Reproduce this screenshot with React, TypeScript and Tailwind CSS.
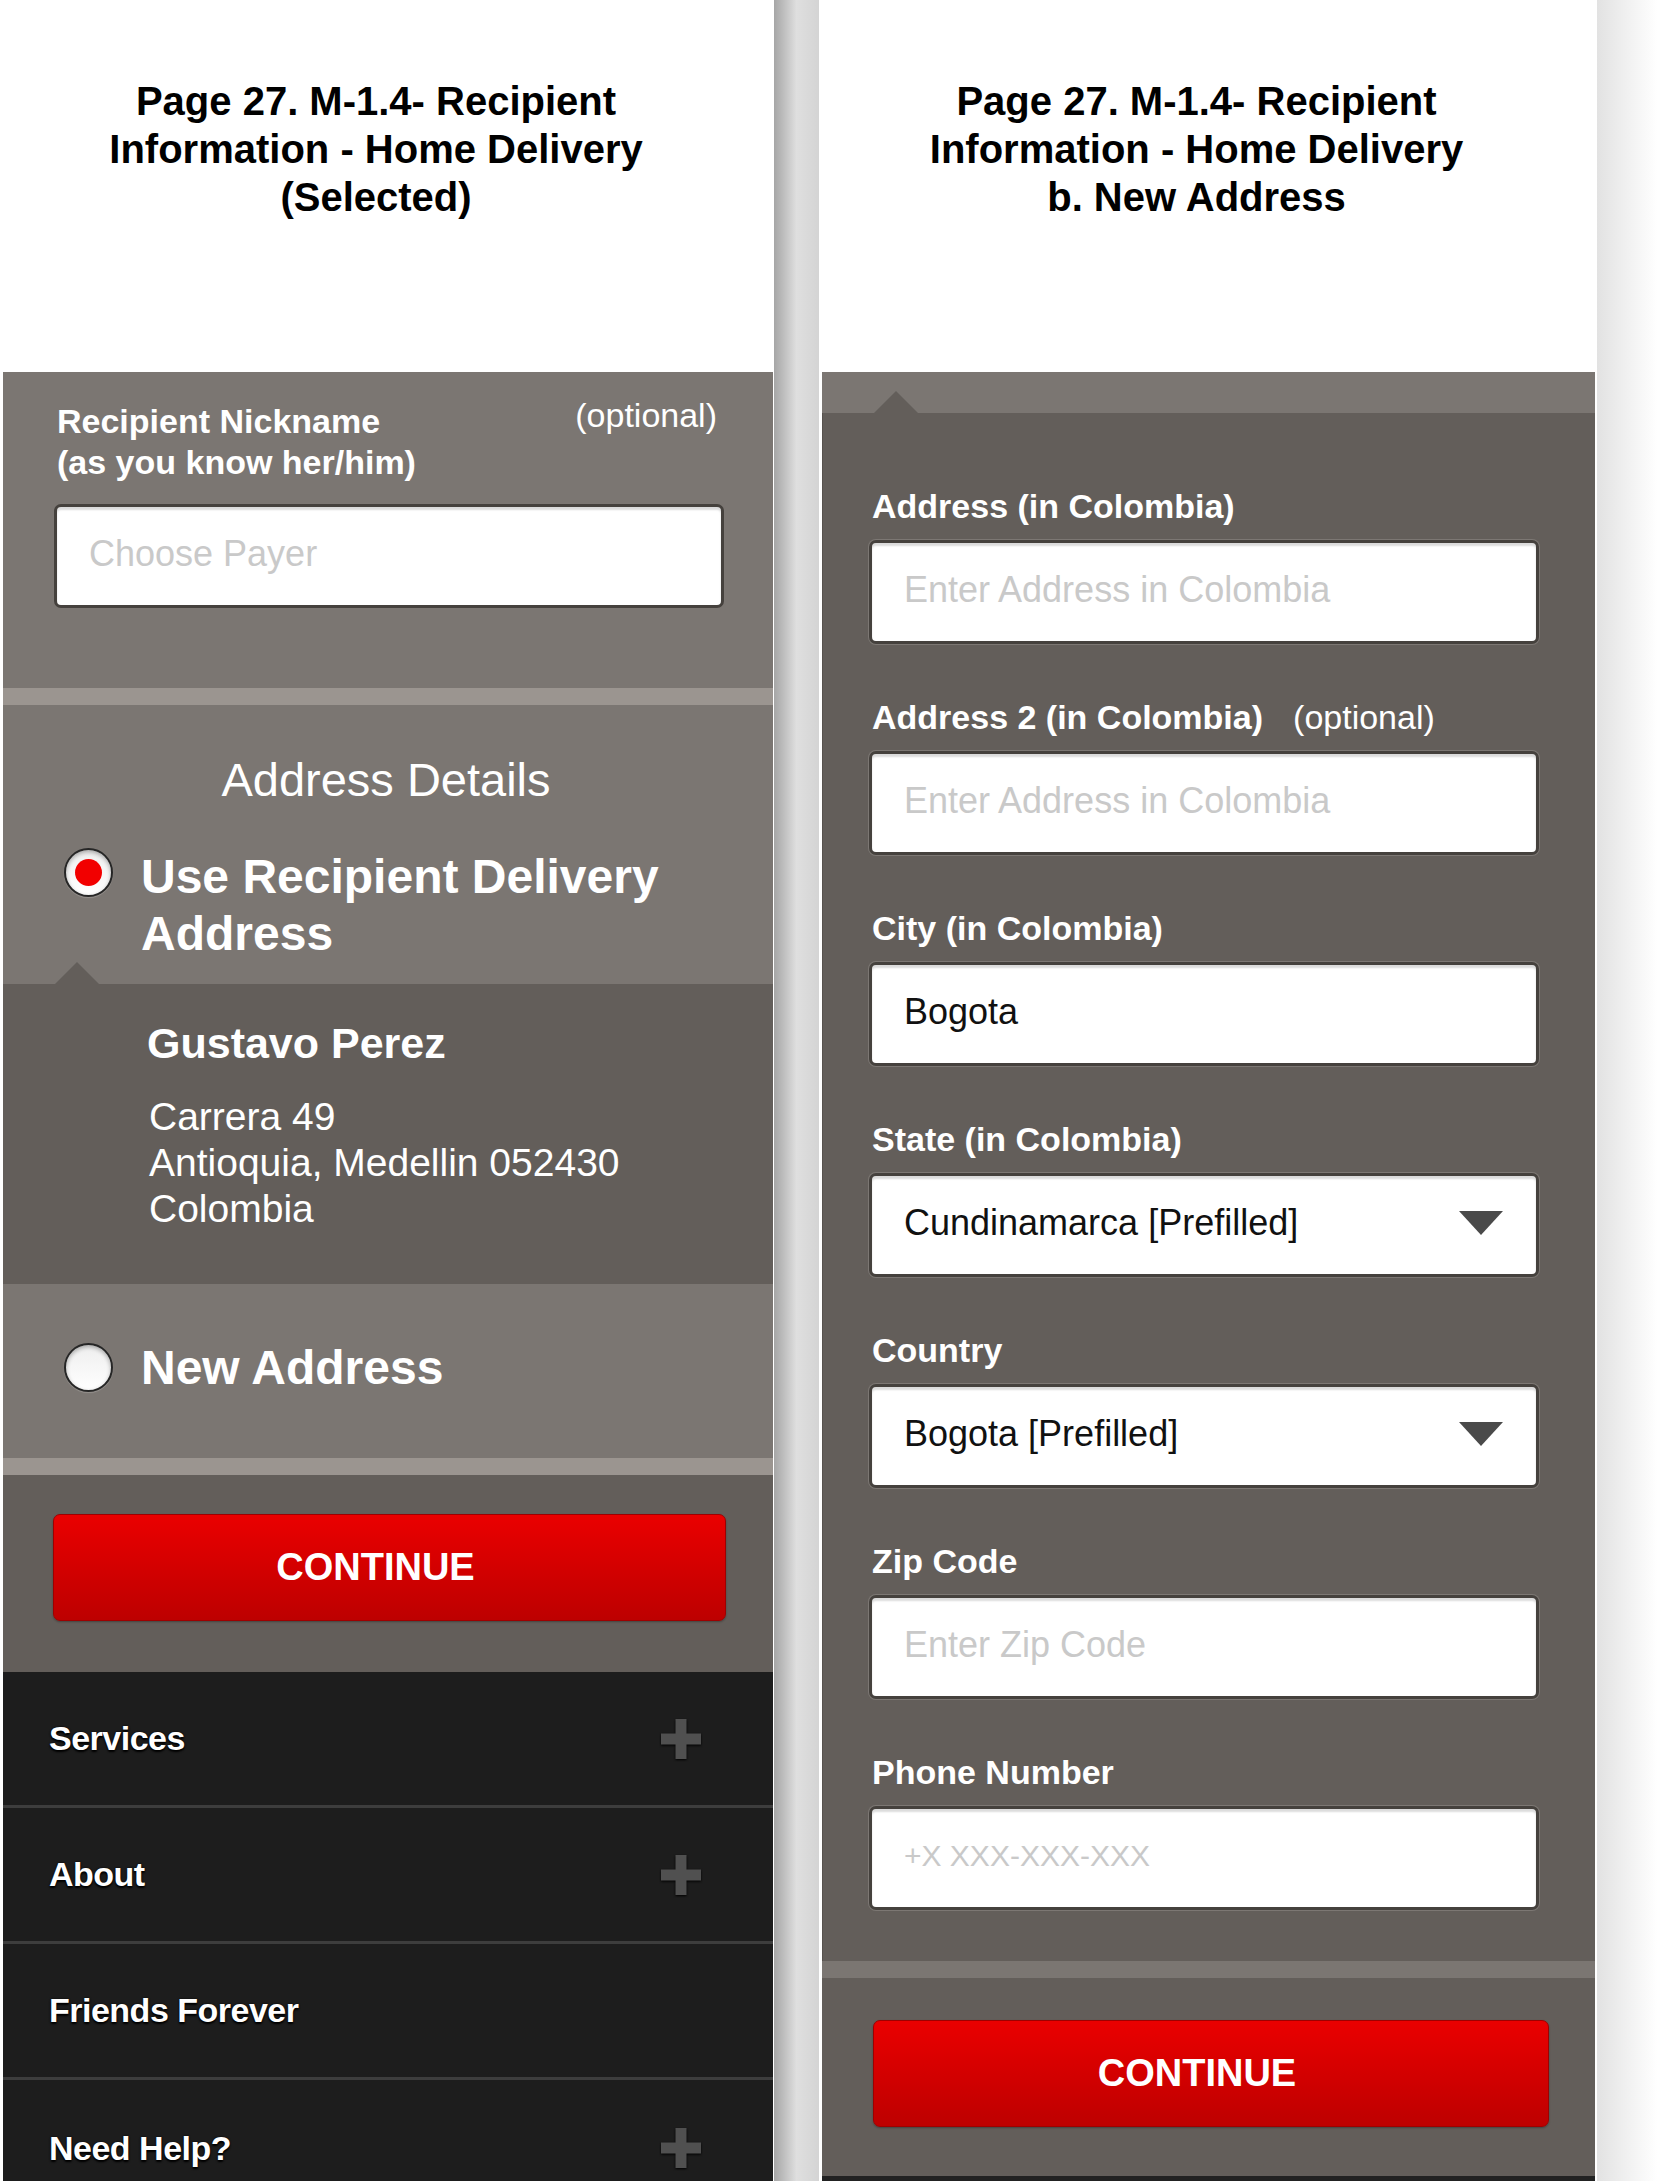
import React from "react";

const FONT = "font-['Liberation_Sans',Arial,sans-serif]";

function PageTitle({ lines }: { lines: string[] }) {
  return (
    <div className="h-[372px] bg-white pt-[77px] pr-6 text-center">
      {lines.map((l) => (
        <div key={l} className="text-[40px] leading-[48px] font-bold text-black">
          {l}
        </div>
      ))}
    </div>
  );
}

function Radio({ checked }: { checked?: boolean }) {
  return (
    <div className="flex h-[49px] w-[49px] shrink-0 items-center justify-center rounded-full border-2 border-[#262626] bg-linear-to-b from-[#eeeeee] to-white shadow-[inset_0_2px_4px_rgba(0,0,0,0.3),0_1px_1px_rgba(255,255,255,0.2)]">
      {checked && <div className="h-[27px] w-[27px] rounded-full bg-[#f20000]" />}
    </div>
  );
}

function Notch({ left, height }: { left: number; height: number }) {
  // little pointer that joins the lighter block with the dark one below
  return (
    <svg
      className="absolute bottom-0"
      style={{ left }}
      width="44"
      height={height}
      viewBox={`0 0 44 ${height}`}
    >
      <polygon points={`0,${height} 22,0 44,${height}`} fill="#635e5a" />
    </svg>
  );
}

function Caret() {
  return (
    <svg width="44" height="24" viewBox="0 0 44 24" className="shrink-0">
      <polygon points="0,0 44,0 22,24" fill="#4a4a4a" />
    </svg>
  );
}

function Plus() {
  return (
    <svg width="40" height="40" viewBox="0 0 40 40" className="drop-shadow-[0_1px_1px_#000]">
      <rect x="0" y="14.5" width="40" height="11" fill="#505050" />
      <rect x="14.5" y="0" width="11" height="40" fill="#505050" />
    </svg>
  );
}

function TextBox({
  placeholder,
  value,
  select,
  small,
}: {
  placeholder?: string;
  value?: string;
  select?: boolean;
  small?: boolean;
}) {
  return (
    <div className="flex h-[104px] items-center justify-between rounded-[7px] border-[3px] border-[#45413d] bg-white pb-[4px] pl-[32px] pr-[33px] shadow-[0_0_0_1px_#7c7773,inset_0_3px_2px_rgba(0,0,0,0.14)]">
      <span
        className={`${small ? "text-[30px]" : "text-[36px]"} leading-[40px] ${
          value ? "text-[#111]" : "text-[#c9c9c9]"
        }`}
      >
        {value ?? placeholder}
      </span>
      {select && <Caret />}
    </div>
  );
}

function ContinueButton() {
  return (
    <div className="flex h-[107px] items-center justify-center rounded-[7px] border border-[#9e0000] bg-linear-to-b from-[#ea0000] to-[#bd0000] pr-[28px] shadow-[0_1px_2px_rgba(0,0,0,0.3)]">
      <span className="text-[38px] font-bold text-white">CONTINUE</span>
    </div>
  );
}

const menu = [
  { label: "Services", plus: true },
  { label: "About", plus: true },
  { label: "Friends Forever", plus: false },
  { label: "Need Help?", plus: true },
];

function LeftScreen() {
  return (
    <div className="ml-[3px] w-[770px] shrink-0">
      <PageTitle lines={["Page 27. M-1.4- Recipient", "Information - Home Delivery", "(Selected)"]} />

      {/* nickname */}
      <div className="h-[316px] bg-[#7b7672] pt-[29px] pl-[51px] pr-[49px]">
        <div className="flex items-start justify-between pl-[3px] pr-[7px]">
          <div className="text-[34px] leading-[41px] font-bold text-white">
            Recipient Nickname
            <br />
            (as you know her/him)
          </div>
          <div className="-mt-[6px] text-[34px] leading-[41px] text-white">(optional)</div>
        </div>
        <div className="mt-[21px]">
          <TextBox placeholder="Choose Payer" />
        </div>
      </div>
      <div className="h-[17px] bg-[#9b9590]" />

      {/* address choice */}
      <div className="relative h-[279px] bg-[#7b7672] pt-[47px]">
        <div className="pr-[4px] text-center text-[47px] leading-[56px] text-white">Address Details</div>
        <div className="mt-[40px] flex items-start gap-[28px] pl-[61px]">
          <Radio checked />
          <div className="text-[48px] leading-[57px] font-bold text-white">
            Use Recipient Delivery
            <br />
            Address
          </div>
        </div>
        <Notch left={52} height={22} />
      </div>

      <div className="h-[300px] bg-[#635e5a] pt-[34px] pl-[144px] text-white">
        <div className="text-[43px] leading-[50px] font-bold">Gustavo Perez</div>
        <div className="mt-[26px] pl-[2px] text-[39px] leading-[46px]">
          Carrera 49
          <br />
          Antioquia, Medellin 052430
          <br />
          Colombia
        </div>
      </div>

      <div className="flex h-[174px] items-center gap-[28px] bg-[#7b7672] pb-[8px] pl-[61px]">
        <Radio />
        <div className="text-[48px] leading-[57px] font-bold text-white">New Address</div>
      </div>
      <div className="h-[17px] bg-[#9b9590]" />

      <div className="h-[197px] bg-[#635e5a] pt-[39px] pl-[50px] pr-[47px]">
        <ContinueButton />
      </div>

      <div className="bg-[#1d1d1d]">
        {menu.map((m, i) => (
          <div
            key={m.label}
            className={`flex h-[136px] items-center justify-between pl-[46px] pr-[72px] ${
              i < menu.length - 1 ? "border-b-[3px] border-[#3d3d3d]" : ""
            }`}
          >
            <span className="text-[34px] font-bold tracking-[-0.5px] text-white [text-shadow:0_2px_2px_#000,0_0_2px_#000]">
              {m.label}
            </span>
            {m.plus && <Plus />}
          </div>
        ))}
      </div>
    </div>
  );
}

const fields = [
  { label: "Address (in Colombia)", placeholder: "Enter Address in Colombia" },
  { label: "Address 2 (in Colombia)", optional: true, placeholder: "Enter Address in Colombia" },
  { label: "City (in Colombia)", value: "Bogota" },
  { label: "State (in Colombia)", value: "Cundinamarca [Prefilled]", select: true },
  { label: "Country", value: "Bogota [Prefilled]", select: true },
  { label: "Zip Code", placeholder: "Enter Zip Code" },
  { label: "Phone Number", placeholder: "+X XXX-XXX-XXX", small: true },
];

function RightScreen() {
  return (
    <div className="w-[773px] shrink-0">
      <PageTitle lines={["Page 27. M-1.4- Recipient", "Information - Home Delivery", "b. New Address"]} />
      <div className="relative h-[41px] bg-[#7b7672]">
        <Notch left={52} height={22} />
      </div>

      <div className="flex flex-col gap-[53px] border-l border-[#57524e] bg-[#635e5a] pt-[73px] pb-[51px] pl-[46px] pr-[56px]">
        {fields.map((f) => (
          <div key={f.label}>
            <div className="pl-[3px] text-[34px] leading-[40px] text-white">
              <span className="font-bold">{f.label}</span>
              {f.optional && <span className="ml-[30px]">(optional)</span>}
            </div>
            <div className="mt-[14px]">
              <TextBox placeholder={f.placeholder} value={f.value} select={f.select} small={f.small} />
            </div>
          </div>
        ))}
      </div>
      <div className="h-[17px] bg-[#7b7672]" />
      <div className="h-[198px] bg-[#635e5a] pt-[42px] pl-[51px] pr-[46px]">
        <ContinueButton />
      </div>
      <div className="h-[10px] bg-[#222]" />
    </div>
  );
}

export default function App() {
  return (
    <div className={`${FONT} flex h-[2181px] w-[1665px] overflow-hidden bg-white`}>
      <LeftScreen />
      <div className="ml-px w-[45px] shrink-0 bg-linear-to-r from-[#a6a6a6] via-[#dfdfdf] to-[#d4d4d4]" />
      <div className="ml-[3px] flex shrink-0">
        <RightScreen />
      </div>
      <div className="ml-[2px] w-[60px] shrink-0 bg-linear-to-r from-[#e2e2e2] to-white" />
    </div>
  );
}
